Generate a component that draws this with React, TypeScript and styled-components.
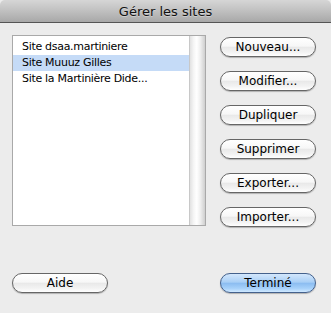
import React from "react";
import styled, { createGlobalStyle } from "styled-components";

const Global = createGlobalStyle`
  html, body { margin: 0; padding: 0; background: #ececec; }
  body { font-family: "DejaVu Sans", "Liberation Sans", sans-serif; }
`;

const Window = styled.div`
  width: 331px;
  height: 313px;
  background: #ececec;
  display: flex;
  flex-direction: column;
  overflow: hidden;
`;

const TitleBar = styled.div`
  height: 22px;
  border-bottom: 1px solid #555;
  border-top-left-radius: 5px;
  border-top-right-radius: 5px;
  background: linear-gradient(#d6d6d6, #c2c2c2 45%, #a8a8a8);
  display: flex;
  align-items: center;
  justify-content: center;
  font-size: 13px;
  color: #111;
  text-shadow: 0 1px 0 rgba(255, 255, 255, 0.35);
`;

const Body = styled.div`
  flex: 1;
  display: flex;
  flex-direction: column;
  padding: 12px 15px 0 12px;
`;

const Main = styled.div`
  display: flex;
  align-items: flex-start;
  gap: 14px;
  height: 191px;
`;

const ListBox = styled.div`
  width: 194px;
  height: 191px;
  box-sizing: border-box;
  border: 1px solid #a9a9a9;
  background: #fff;
  display: flex;
`;

const Rows = styled.div`
  flex: 1;
  padding-top: 3px;
  display: flex;
  flex-direction: column;
`;

const Row = styled.div<{ $selected?: boolean }>`
  height: 16px;
  line-height: 16px;
  padding-left: 9px;
  font-size: 11px;
  letter-spacing: -0.3px;
  color: #000;
  white-space: nowrap;
  background: ${(p) => (p.$selected ? "#c5dbf7" : "transparent")};
`;

const Scroll = styled.div`
  width: 15px;
  border-left: 1px solid #c8c8c8;
  background: linear-gradient(90deg, #e2e2e2, #f6f6f6 25%, #ffffff 45%, #eeeeee 70%, #cfcfcf);
`;

const Buttons = styled.div`
  display: flex;
  flex-direction: column;
  gap: 14px;
  padding-top: 2px;
`;

const Pill = styled.button<{ $primary?: boolean }>`
  width: 96px;
  height: 20px;
  box-sizing: border-box;
  padding: 0;
  border-radius: 10px;
  border: 1px solid ${(p) => (p.$primary ? "#44618c" : "#666")};
  background: ${(p) =>
    p.$primary
      ? "linear-gradient(#d3e7fc, #a9cff6 45%, #8cbdf1 52%, #a7d1fa 80%, #cfe8ff)"
      : "linear-gradient(#ffffff, #f7f7f7 45%, #e9e9e9 52%, #f3f3f3 80%, #ffffff)"};
  box-shadow: 0 1px 1px rgba(0, 0, 0, 0.25);
  font-family: "DejaVu Sans", "Liberation Sans", sans-serif;
  font-size: 12px;
  line-height: 18px;
  color: #000;
  text-align: center;
`;

const Footer = styled.div`
  display: flex;
  justify-content: space-between;
  margin-top: 47px;
`;

export default function App() {
  return (
    <>
      <Global />
      <Window>
        <TitleBar>Gérer les sites</TitleBar>
        <Body>
          <Main>
            <ListBox>
              <Rows>
                <Row>Site dsaa.martiniere</Row>
                <Row $selected>Site Muuuz Gilles</Row>
                <Row>Site la Martinière Dide...</Row>
              </Rows>
              <Scroll />
            </ListBox>
            <Buttons>
              <Pill>Nouveau...</Pill>
              <Pill>Modifier...</Pill>
              <Pill>Dupliquer</Pill>
              <Pill>Supprimer</Pill>
              <Pill>Exporter...</Pill>
              <Pill>Importer...</Pill>
            </Buttons>
          </Main>
          <Footer>
            <Pill>Aide</Pill>
            <Pill $primary>Terminé</Pill>
          </Footer>
        </Body>
      </Window>
    </>
  );
}
